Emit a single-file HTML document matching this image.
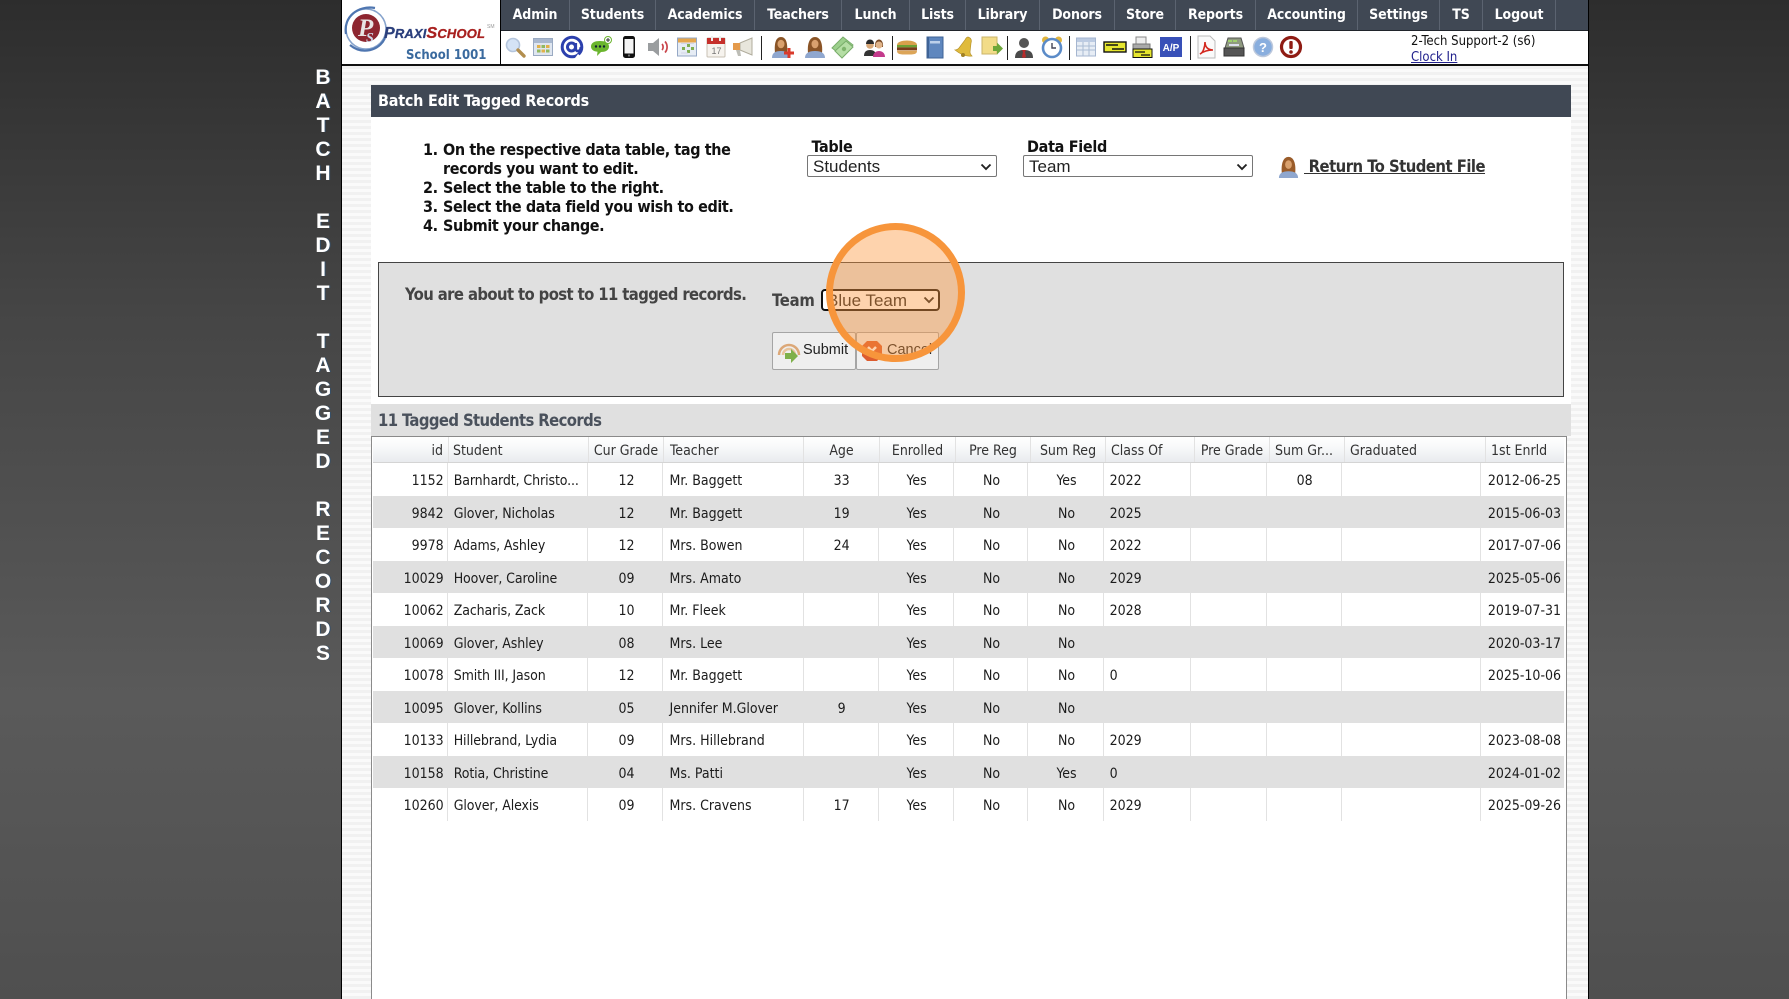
<!DOCTYPE html>
<html><head><meta charset="utf-8"><title>Batch Edit Tagged Records</title>
<style>
*{box-sizing:border-box}
html,body{margin:0;padding:0;width:1789px;height:999px;overflow:hidden}
body{position:relative;background:linear-gradient(180deg,#2d2d2d 0,#454545 310px,#5a5a5a 700px,#4f4f4f 999px);font-family:"DejaVu Sans Condensed","DejaVu Sans",sans-serif;font-stretch:condensed;color:#222}
.a{position:absolute}
#panel{left:341px;top:0;width:1248px;height:999px;border-left:1px solid #000;border-right:1px solid #000;background:repeating-linear-gradient(180deg,#f1f1f1 0,#f1f1f1 3px,#fafafa 3px,#fafafa 6px)}
#side{left:303px;top:66px;width:40px;text-align:center;color:#fff;font:bold 21px/24px "Liberation Sans",sans-serif;text-shadow:1px 0 0 #35506a}
#head{left:342px;top:0;width:1246px;height:66px;background:#fff;border-bottom:2px solid #111}
#navb{left:500px;top:0;width:1088px;height:31px;background:#404854;border-bottom:1px solid #20242b;border-left:1px solid #000}
.n{position:absolute;top:0;height:30px;line-height:31px;text-align:center;color:#fff;font-weight:bold;font-size:14px;letter-spacing:-.1px;border-right:1px solid #5b6370;white-space:nowrap}
#vline{left:500px;top:0;width:1px;height:65px;background:#000}
.i{position:absolute;top:35px;width:24px;height:24px}
.s{position:absolute;top:36px;width:1px;height:24px;background:#222}
#title{left:371px;top:85px;width:1200px;height:32px;background:#404854;color:#fff;font:bold 16px/32px "DejaVu Sans Condensed","DejaVu Sans",sans-serif;font-stretch:condensed;letter-spacing:-.23px;padding-left:7px}
#white{left:371px;top:117px;width:1196px;height:287px;background:#fff}
#white2{left:1567px;top:117px;width:4px;height:287px;background:#fff}
ol{position:absolute;left:423px;top:140px;margin:0;padding:0;list-style:none;font-weight:bold;font-size:16px;letter-spacing:-.39px;line-height:19px;color:#111;width:325px}
ol li{padding-left:20px;position:relative}
ol b{position:absolute;left:0}
.lab{position:absolute;font-weight:bold;font-size:16px;letter-spacing:-.3px;color:#111;line-height:20px}
select{position:absolute;font:17px "Liberation Sans",sans-serif;background:#fff;color:#222;border:1px solid #767676;border-radius:2px;height:22px;padding:1px 0 0 5px;margin:0;appearance:none;-webkit-appearance:none}
.chev{position:absolute;width:12px;height:8px}
#ret{left:1304px;top:156px;font-weight:bold;font-size:16.5px;letter-spacing:-.52px;line-height:22px;color:#333;text-decoration:underline;white-space:pre}
#box{left:378px;top:262px;width:1186px;height:135px;background:#e0e0e0;border:1px solid #444}
#msg{left:405px;top:285px;font-weight:bold;font-size:16.5px;letter-spacing:-.6px;line-height:20px;color:#444;white-space:nowrap}
#tm{left:772px;top:291px;font-weight:bold;font-size:16.5px;letter-spacing:-.2px;line-height:20px;color:#444}
.btn{position:absolute;top:332px;height:38px;background:#efefef;border:1px solid #a5a5a5;border-radius:2px;font:14.5px/34px "Liberation Sans",sans-serif;color:#222;white-space:nowrap}
#sec{left:371px;top:404px;width:1200px;height:32px;background:#e0e0e0;color:#4a515c;font:bold 16.5px/33px "DejaVu Sans Condensed","DejaVu Sans",sans-serif;font-stretch:condensed;letter-spacing:-.6px;padding-left:7px}
#tb{left:371px;top:436px;width:1196px;height:563px;background:#fff;border:1px solid #8a8a8a;border-bottom:0}
#hd{left:373px;top:437px;width:1191px;height:26px;background:linear-gradient(180deg,#fff 0,#f8f9fa 40%,#e9ebee 100%);border-bottom:1px solid #d4d4d4;font-size:14px;line-height:28px;color:#333}
#hd span{position:absolute;top:0;height:25px;text-align:center;border-right:1px solid #e2e2e2;white-space:nowrap}
#rows{left:373px;top:463px;width:1191px;font-size:14px;color:#1c1c1c}
.r{display:flex;height:32.55px;line-height:36px;background:#fff}
.r:nth-child(even){background:#e0e0e0}
.r span{flex:none;display:block;text-align:center;white-space:nowrap;border-right:1px solid #e2e2e2;height:100%;padding-left:2px;overflow:visible}
.r:nth-child(even) span{border-right-color:transparent}
.r span:nth-child(1){width:74.7px;text-align:right;padding-left:0;padding-right:3px}
.r span:nth-child(2){width:140.8px;text-align:left;padding-left:6px;letter-spacing:-.1px}
.r span:nth-child(3){width:75px}
.r span:nth-child(4){width:140.1px;text-align:left;padding-left:6px}
.r span:nth-child(5){width:75px}
.r span:nth-child(6){width:75px}
.r span:nth-child(7){width:74.9px}
.r span:nth-child(8){width:75.1px}
.r span:nth-child(9){width:87.8px;text-align:left;padding-left:6px}
.r span:nth-child(10){width:75.2px}
.r span:nth-child(11){width:75.1px}
.r span:nth-child(12){width:139.2px}
.r span:nth-child(13){width:83.1px;text-align:left;padding-left:7px;border-right:0}
#circle{left:826px;top:223px;width:139px;height:139px;border-radius:50%;border:7px solid #f7953b;background:rgba(252,150,60,.42)}
</style></head><body>
<div class="a" id="panel"></div>
<div class="a" id="side">B<br>A<br>T<br>C<br>H<br><br>E<br>D<br>I<br>T<br><br>T<br>A<br>G<br>G<br>E<br>D<br><br>R<br>E<br>C<br>O<br>R<br>D<br>S</div>

<div class="a" id="head"></div>
<div class="a" id="navb">
<div class="n" style="left:0;width:69px">Admin</div>
<div class="n" style="left:69px;width:86px">Students</div>
<div class="n" style="left:155px;width:99px">Academics</div>
<div class="n" style="left:254px;width:87px">Teachers</div>
<div class="n" style="left:341px;width:68px">Lunch</div>
<div class="n" style="left:409px;width:56px">Lists</div>
<div class="n" style="left:465px;width:74px">Library</div>
<div class="n" style="left:539px;width:75px">Donors</div>
<div class="n" style="left:614px;width:61px">Store</div>
<div class="n" style="left:675px;width:80px">Reports</div>
<div class="n" style="left:755px;width:102px">Accounting</div>
<div class="n" style="left:857px;width:82px">Settings</div>
<div class="n" style="left:939px;width:43px">TS</div>
<div class="n" style="left:982px;width:73px">Logout</div>
</div>
<div class="a" id="vline"></div>

<!-- logo -->
<svg class="a" style="left:342px;top:0" width="158" height="64" viewBox="0 0 158 64">
<ellipse cx="24" cy="29" rx="20" ry="20" fill="none" stroke="#86a3cc" stroke-width="1.600"/>
<path d="M4 34C1 17 16 5 33 8M8 45C20 55 37 51 43 38" fill="none" stroke="#4f76b0" stroke-width="2.200"/>
<circle cx="24" cy="28" r="14" fill="#8e2630"/>
<text x="16" y="36" font-family="Liberation Serif" font-style="italic" font-weight="bold" font-size="25" fill="#e8e4e4">P</text>
<text x="24" y="42" font-family="Liberation Serif" font-style="italic" font-weight="bold" font-size="14" fill="#cfd8e8">S</text>
<text x="42" y="38" font-family="Liberation Sans" font-style="italic" font-weight="bold" font-size="16" textLength="101" lengthAdjust="spacing" fill="#2b3f7c" stroke="#2b3f7c" stroke-width=".3">P<tspan font-size="13">RAXI</tspan><tspan fill="#a8201f" stroke="#a8201f" font-size="16">S</tspan><tspan fill="#a8201f" stroke="#a8201f" font-size="13">CHOOL</tspan></text>
<text x="145" y="28" font-family="Liberation Sans" font-size="5" fill="#999">SM</text>
<text x="64" y="59" font-family="DejaVu Sans" font-weight="bold" font-size="13" style="font-stretch:condensed" fill="#3a6a9e">School 1001</text>
</svg>

<!-- toolbar icons -->
<svg class="i" style="left:503px" viewBox="0 0 24 24"><circle cx="10" cy="10" r="6.500" fill="#d5e3f5" stroke="#b4c5dc" stroke-width="1.600"/><path d="M15 15l6 6" stroke="#b28e4e" stroke-width="3.400" stroke-linecap="round"/></svg>
<svg class="i" style="left:531px" viewBox="0 0 24 24"><rect x="2.500" y="3.500" width="19" height="17" fill="#dfe6f0" stroke="#9aaac2"/><rect x="3" y="4" width="18" height="4" fill="#a9b8cf"/><rect x="6" y="10" width="3.500" height="3" fill="#e0b14a"/><rect x="10.500" y="10" width="3.500" height="3" fill="#90b860"/><rect x="15" y="10" width="3.500" height="3" fill="#e0b14a"/><rect x="6" y="14.500" width="3.500" height="3" fill="#90b860"/><rect x="10.500" y="14.500" width="3.500" height="3" fill="#e0b14a"/><rect x="15" y="14.500" width="3.500" height="3" fill="#90b860"/></svg>
<svg class="i" style="left:560px" viewBox="0 0 24 24"><circle cx="12" cy="12" r="9.800" fill="none" stroke="#2c40ad" stroke-width="3"/><circle cx="11.500" cy="12" r="4" fill="none" stroke="#2c40ad" stroke-width="3"/><path d="M15.800 8v6c0 3 5 3 5-2" fill="none" stroke="#2c40ad" stroke-width="2.600"/><path d="M18 19l5 4h-8z" fill="#fff"/></svg>
<svg class="i" style="left:589px" viewBox="0 0 24 24"><path d="M2 11.500C2 7.500 6 6 11 6s9 1.500 9 5.500-4 5.500-8 5.500l-4 4 .5-4.300C4.500 16.500 2 14.500 2 11.500z" fill="#6bb52e"/><circle cx="7" cy="11.500" r="1.200" fill="#123"/><circle cx="11" cy="11.500" r="1.200" fill="#123"/><circle cx="15" cy="11.500" r="1.200" fill="#123"/><circle cx="19" cy="5" r="3.500" fill="#fff" stroke="#6bb52e"/><path d="M19 3v4M17 5h4" stroke="#333"/></svg>
<svg class="i" style="left:617px" viewBox="0 0 24 24"><rect x="6" y="1" width="12" height="22" rx="2.500" fill="#111"/><rect x="7.500" y="4" width="9" height="14.500" fill="#f4f4f4"/><circle cx="12" cy="20.500" r="1.100" fill="#777"/></svg>
<svg class="i" style="left:646px" viewBox="0 0 24 24"><path d="M2 8h5l6-5v18l-6-5H2z" fill="#9a9d9f"/><path d="M16 9c1.500 1.500 1.500 4.500 0 6M19 6.500c2.800 3 2.800 8 0 11" fill="none" stroke="#c9444a" stroke-width="1.700"/></svg>
<svg class="i" style="left:675px" viewBox="0 0 24 24"><rect x="2.500" y="3" width="19" height="18" fill="#e6ecf4" stroke="#95a8c6"/><rect x="3" y="3.500" width="18" height="4" fill="#e6a64c"/><path d="M7 12h3v3H7zM12 9h3v3h-3zM12 15h3v3h-3zM16 12h3v3h-3z" fill="#7fae50"/><path d="M6 8.500h13M6 18h7" stroke="#ccd" stroke-width=".8"/></svg>
<svg class="i" style="left:704px" viewBox="0 0 24 24"><rect x="3" y="3" width="18" height="19" rx="1" fill="#f6f3ee" stroke="#c8c0b4"/><rect x="3" y="3" width="18" height="6" fill="#c6302c"/><rect x="7" y="1" width="2" height="5" fill="#eee"/><rect x="15" y="1" width="2" height="5" fill="#eee"/><text x="7.500" y="19" font-family="Liberation Sans" font-size="9" fill="#777">17</text></svg>
<svg class="i" style="left:731px" viewBox="0 0 24 24"><path d="M9 8l12-5v17L9 15z" fill="#e8e6dc" stroke="#b0ac9c"/><path d="M2 8h7v7H2z" fill="#e49a4b"/><path d="M5 15h4l1 6H7z" fill="#bdbdb6"/></svg>
<div class="s" style="left:761px"></div>
<svg class="i" style="left:770px" viewBox="0 0 24 24"><path d="M5 18C4 8 6 2 11 2s7 6 6 16z" fill="#8a5426"/><ellipse cx="11" cy="9" rx="3.500" ry="4.300" fill="#d9a16e"/><path d="M2 23c0-5 3-7 9-7s9 2 9 7z" fill="#8fa7cf"/><path d="M17.500 13h3v3.500H24v3h-3.500V23h-3v-3.500H14v-3h3.500z" fill="#d93a2b"/></svg>
<svg class="i" style="left:803px" viewBox="0 0 24 24"><path d="M5 18C4 8 7 2 12 2s8 6 7 16z" fill="#8a5426"/><ellipse cx="12" cy="9" rx="3.500" ry="4.300" fill="#d9a16e"/><path d="M2 23c0-5 4-7 10-7s10 2 10 7z" fill="#8fa7cf"/></svg>
<svg class="i" style="left:831px" viewBox="0 0 24 24"><path d="M1 13L12 2l10 8-11 11z" fill="#9ccf8c" stroke="#78ad6a"/><path d="M4 16L15 6l7 6-11 11z" fill="#b5dea5" stroke="#78ad6a"/><circle cx="13" cy="14" r="2.200" fill="#7fb56e"/></svg>
<svg class="i" style="left:863px" viewBox="0 0 24 24"><path d="M1 21c0-4 2-6 6-6s6 2 6 6z" fill="#333"/><circle cx="7" cy="10" r="3.800" fill="#d8a878"/><path d="M3 9c0-6 8-6 8 0z" fill="#2a2a2a"/><path d="M12 12c-1-10 9-10 8 0z" fill="#7a4a26"/><circle cx="16" cy="10" r="3.500" fill="#e0b48a"/><path d="M10 22c0-4 3-6 6-6s6 2 6 6z" fill="#c43a8c"/></svg>
<div class="s" style="left:892px"></div>
<svg class="i" style="left:895px" viewBox="0 0 24 24"><path d="M2 10C2 4 22 4 22 10z" fill="#d8a04c"/><rect x="2" y="10" width="20" height="2.400" fill="#6da034"/><rect x="2" y="12.400" width="20" height="2.800" fill="#7a3d1c"/><path d="M2 15.500h20c0 4-3 4-10 4s-10 0-10-4z" fill="#dca558"/></svg>
<svg class="i" style="left:923px" viewBox="0 0 24 24"><path d="M4 2h16v21H4z" fill="#5f87be" stroke="#3f6396"/><rect x="7" y="6" width="10" height="2.500" fill="#bcd0ea"/><rect x="4" y="2" width="2" height="21" fill="#3f6396"/></svg>
<svg class="i" style="left:952px" viewBox="0 0 24 24"><path d="M16 2c3 1 4 3 3 6l-1 9c0 2 1 3 2 4-6 1-12-2-17-6 2 0 3-1 4-2l6-8c1-2 2-3 3-3z" fill="#e0bb3c" stroke="#b8942c" stroke-width=".7"/><circle cx="11" cy="20" r="2" fill="#a08024"/></svg>
<svg class="i" style="left:980px" viewBox="0 0 24 24"><rect x="2" y="2" width="15" height="17" fill="#f2dc88" stroke="#cbb56a"/><path d="M13 11h4V7.500l6 6-6 6V16h-4z" fill="#6da638"/></svg>
<div class="s" style="left:1007px"></div>
<svg class="i" style="left:1012px" viewBox="0 0 24 24"><path d="M3 23c0-6 3-8 9-8s9 2 9 8z" fill="#4a4a4a"/><circle cx="12" cy="8" r="5" fill="#555"/><path d="M10 15h4l-1 2 1 5-2 1-2-1 1-5z" fill="#b52c2c"/></svg>
<svg class="i" style="left:1040px" viewBox="0 0 24 24"><circle cx="5.500" cy="5" r="3.500" fill="#e2b53c"/><circle cx="18.500" cy="5" r="3.500" fill="#e2b53c"/><circle cx="12" cy="13" r="9" fill="#fff" stroke="#5b8bc8" stroke-width="2.600"/><path d="M12 8v5h4" fill="none" stroke="#445" stroke-width="1.400"/></svg>
<div class="s" style="left:1069px"></div>
<svg class="i" style="left:1074px" viewBox="0 0 24 24"><rect x="2.500" y="3" width="19" height="18" fill="#e7edf5" stroke="#a5b6d0"/><rect x="3" y="3.500" width="18" height="3.500" fill="#bccbe2"/><path d="M3 11h18M3 15h18M9 7v14M15 7v14" stroke="#aabbd4"/></svg>
<svg class="i" style="left:1103px" viewBox="0 0 24 24"><rect x="1" y="7" width="22" height="10" fill="#e6e62e" stroke="#111" stroke-width="1.400"/><path d="M3 10h12M9 14h12" stroke="#111" stroke-width="1.500"/></svg>
<svg class="i" style="left:1130px" viewBox="0 0 24 24"><path d="M6 2h10v7H6z" fill="#eee" stroke="#888"/><path d="M3 9h17v6H3z" fill="#aaa" stroke="#777"/><rect x="3" y="14" width="19" height="8.500" fill="#e6e62e" stroke="#111"/><path d="M5 17h10M11 20h9" stroke="#111" stroke-width="1.200"/></svg>
<svg class="i" style="left:1159px" viewBox="0 0 24 24"><rect x="1" y="2" width="22" height="20" fill="#3850b8"/><text x="12" y="16" text-anchor="middle" font-family="Liberation Sans" font-weight="bold" font-size="10" fill="#fff">A/P</text></svg>
<div class="s" style="left:1190px"></div>
<svg class="i" style="left:1194px" viewBox="0 0 24 24"><path d="M4 1h12l5 5v17H4z" fill="#fafafa" stroke="#bbb"/><path d="M6 19c3-1 5-7 5-12 0 5 3 8 8 8-5 0-9 1-13 4z" fill="none" stroke="#d3281f" stroke-width="1.600"/></svg>
<svg class="i" style="left:1222px" viewBox="0 0 24 24"><path d="M6 3h13l3 10H3z" fill="#8f9a80" stroke="#555"/><path d="M2 13h20v8H2z" fill="#555" stroke="#333"/><rect x="6" y="5" width="4" height="2" fill="#9fcf6e"/><rect x="11" y="5" width="4" height="2" fill="#9fcf6e"/><rect x="7" y="9" width="10" height="2" fill="#dde"/></svg>
<svg class="i" style="left:1251px" viewBox="0 0 24 24"><circle cx="12" cy="12" r="9.500" fill="#89aede" stroke="#bcc8dc" stroke-width="1.500"/><text x="12" y="17" text-anchor="middle" font-family="Liberation Sans" font-weight="bold" font-size="13" fill="#fff">?</text></svg>
<svg class="i" style="left:1279px" viewBox="0 0 24 24"><circle cx="12" cy="12" r="9.500" fill="#fff" stroke="#8f1c14" stroke-width="3.200"/><rect x="10.300" y="6" width="3.400" height="8" rx="1" fill="#8f1c14"/><circle cx="12" cy="17" r="1.800" fill="#8f1c14"/></svg>

<div class="a" style="left:1411px;top:34px;font-size:13px;line-height:16px;color:#111;white-space:nowrap">2-Tech Support-2 (s6)<br><span style="color:#20208c;text-decoration:underline">Clock In</span></div>

<div class="a" id="title">Batch Edit Tagged Records</div>
<div class="a" id="white"></div><div class="a" id="white2"></div>

<ol><li><b>1.</b>On the respective data table, tag the records you want to edit.</li><li><b>2.</b>Select the table to the right.</li><li><b>3.</b>Select the data field you wish to edit.</li><li><b>4.</b>Submit your change.</li></ol>

<div class="lab" style="left:811.500px;top:137px">Table</div>
<select style="left:807px;top:155px;width:190px"><option>Students</option></select>
<svg class="chev" style="left:980px;top:163px" viewBox="0 0 12 8"><path d="M1.500 1.500L6 6l4.500-4.500" fill="none" stroke="#222" stroke-width="1.900"/></svg>
<div class="lab" style="left:1027px;top:137px">Data Field</div>
<select style="left:1023px;top:155px;width:230px"><option>Team</option></select>
<svg class="chev" style="left:1236px;top:163px" viewBox="0 0 12 8"><path d="M1.500 1.500L6 6l4.500-4.500" fill="none" stroke="#222" stroke-width="1.900"/></svg>
<svg class="a" style="left:1277px;top:155px" width="23" height="23" viewBox="0 0 24 24"><path d="M5 19C4 8 7 2 12 2s8 6 7 17z" fill="#9a5c2a"/><ellipse cx="12" cy="10" rx="3.500" ry="4.500" fill="#d9a16e"/><path d="M2 24c0-5 4-7 10-7s10 2 10 7z" fill="#8fa7cf"/></svg>
<div class="a" id="ret"> Return To Student File</div>

<div class="a" id="box"></div>
<div class="a" id="msg">You are about to post to 11 tagged records.</div>
<div class="a" id="tm">Team</div>
<select style="left:821px;top:289px;width:119px;border:2px solid #111;border-radius:4px;padding:0 0 1px 4px"><option>Blue Team</option></select>
<svg class="chev" style="left:923px;top:296px" viewBox="0 0 12 8"><path d="M1.500 1.500L6 6l4.500-4.500" fill="none" stroke="#222" stroke-width="1.900"/></svg>
<div class="btn" style="left:772px;width:84px;padding-left:30px">Submit</div>
<svg class="a" style="left:777px;top:339px" width="24" height="25" viewBox="0 0 24 25"><path d="M2 16a10 10 0 0 1 20 0" fill="none" stroke="#dca878" stroke-width="2.500"/><path d="M6 16a6 6 0 0 1 12 0" fill="none" stroke="#e8c49c" stroke-width="2.500"/><path d="M8 14h6v-4l7 7-7 7v-4H8z" fill="#7eb04a"/></svg>
<div class="btn" style="left:856px;width:83px;padding-left:30px">Cancel</div>
<svg class="a" style="left:861px;top:340px" width="22" height="22" viewBox="0 0 22 22"><path d="M6 1h10l5 5v10l-5 5H6l-5-5V6z" fill="#dd5c2e"/><path d="M7 7l8 8M15 7l-8 8" stroke="#fff" stroke-width="2.500"/></svg>

<div class="a" id="sec">11 Tagged Students Records</div>
<div class="a" id="tb"></div>
<div class="a" id="hd">
<span style="left:0;width:76px;text-align:right;padding-right:5px">id</span>
<span style="left:76px;width:140px;text-align:left;padding-left:4px">Student</span>
<span style="left:216px;width:75px">Cur Grade</span>
<span style="left:291px;width:140px;text-align:left;padding-left:6px">Teacher</span>
<span style="left:431px;width:76px">Age</span>
<span style="left:507px;width:76px">Enrolled</span>
<span style="left:583px;width:75px">Pre Reg</span>
<span style="left:658px;width:75px">Sum Reg</span>
<span style="left:733px;width:89px;text-align:left;padding-left:5px">Class Of</span>
<span style="left:822px;width:75px">Pre Grade</span>
<span style="left:897px;width:75px;padding-right:6px">Sum Gr...</span>
<span style="left:972px;width:141px;text-align:left;padding-left:5px">Graduated</span>
<span style="left:1113px;width:78px;text-align:left;padding-left:5px;border:0">1st Enrld</span>
</div>
<div class="a" id="rows">
<div class="r"><span>1152</span><span>Barnhardt, Christo...</span><span>12</span><span>Mr. Baggett</span><span>33</span><span>Yes</span><span>No</span><span>Yes</span><span>2022</span><span></span><span>08</span><span></span><span>2012-06-25</span></div>
<div class="r"><span>9842</span><span>Glover, Nicholas</span><span>12</span><span>Mr. Baggett</span><span>19</span><span>Yes</span><span>No</span><span>No</span><span>2025</span><span></span><span></span><span></span><span>2015-06-03</span></div>
<div class="r"><span>9978</span><span>Adams, Ashley</span><span>12</span><span>Mrs. Bowen</span><span>24</span><span>Yes</span><span>No</span><span>No</span><span>2022</span><span></span><span></span><span></span><span>2017-07-06</span></div>
<div class="r"><span>10029</span><span>Hoover, Caroline</span><span>09</span><span>Mrs. Amato</span><span></span><span>Yes</span><span>No</span><span>No</span><span>2029</span><span></span><span></span><span></span><span>2025-05-06</span></div>
<div class="r"><span>10062</span><span>Zacharis, Zack</span><span>10</span><span>Mr. Fleek</span><span></span><span>Yes</span><span>No</span><span>No</span><span>2028</span><span></span><span></span><span></span><span>2019-07-31</span></div>
<div class="r"><span>10069</span><span>Glover, Ashley</span><span>08</span><span>Mrs. Lee</span><span></span><span>Yes</span><span>No</span><span>No</span><span></span><span></span><span></span><span></span><span>2020-03-17</span></div>
<div class="r"><span>10078</span><span>Smith III, Jason</span><span>12</span><span>Mr. Baggett</span><span></span><span>Yes</span><span>No</span><span>No</span><span>0</span><span></span><span></span><span></span><span>2025-10-06</span></div>
<div class="r"><span>10095</span><span>Glover, Kollins</span><span>05</span><span>Jennifer M.Glover</span><span>9</span><span>Yes</span><span>No</span><span>No</span><span></span><span></span><span></span><span></span><span></span></div>
<div class="r"><span>10133</span><span>Hillebrand, Lydia</span><span>09</span><span>Mrs. Hillebrand</span><span></span><span>Yes</span><span>No</span><span>No</span><span>2029</span><span></span><span></span><span></span><span>2023-08-08</span></div>
<div class="r"><span>10158</span><span>Rotia, Christine</span><span>04</span><span>Ms. Patti</span><span></span><span>Yes</span><span>No</span><span>Yes</span><span>0</span><span></span><span></span><span></span><span>2024-01-02</span></div>
<div class="r"><span>10260</span><span>Glover, Alexis</span><span>09</span><span>Mrs. Cravens</span><span>17</span><span>Yes</span><span>No</span><span>No</span><span>2029</span><span></span><span></span><span></span><span>2025-09-26</span></div>
</div>
<div class="a" id="circle"></div>
</body></html>
